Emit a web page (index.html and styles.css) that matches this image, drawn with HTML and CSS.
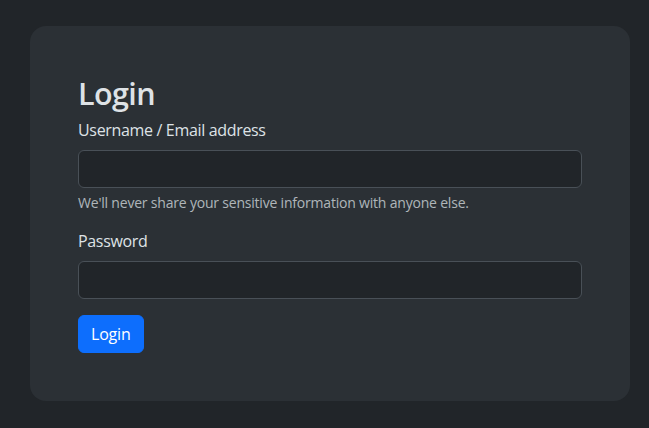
FILE: index.html
```html
<!DOCTYPE html>
<html lang="en">
<head>
<meta charset="utf-8">
<title>Login</title>
<link rel="stylesheet" href="styles.css">
</head>
<body>
<main class="card">
  <h1 class="title">Login</h1>
  <form class="form">
    <div class="field">
      <label class="label" for="user">Username / Email address</label>
      <input class="input" id="user" type="text">
      <div class="help">We'll never share your sensitive information with anyone else.</div>
    </div>
    <div class="field">
      <label class="label" for="pass">Password</label>
      <input class="input" id="pass" type="password">
    </div>
    <button class="btn" type="button">Login</button>
  </form>
</main>
</body>
</html>
```
FILE: styles.css
```css
html, body {
  margin: 0;
  padding: 0;
}
body {
  background: #212529;
  color: #dee2e6;
  font-family: "Open Sans", "Noto Sans", sans-serif;
  font-size: 16px;
  line-height: 24px;
  padding: 26px 19px 0 30px;
  height: 428px;
  box-sizing: border-box;
}
.card {
  width: 600px;
  box-sizing: border-box;
  background: #2b3035;
  border-radius: 16px;
  padding: 48px;
}
.title {
  margin: 0 0 6px;
  font-size: 30.5px;
  line-height: 38px;
  font-weight: 600;
  letter-spacing: -0.6px;
}
.form {
  margin: 0;
}
.field {
  margin-bottom: 16px;
}
.label {
  display: block;
  margin-bottom: 8px;
  letter-spacing: -0.33px;
}
.input {
  display: block;
  width: 100%;
  box-sizing: border-box;
  height: 38px;
  margin: 0;
  padding: 6px 12px;
  background: #212529;
  border: 1px solid #495057;
  border-radius: 6px;
  color: #dee2e6;
  font: inherit;
}
.help {
  margin-top: 4px;
  font-size: 14px;
  line-height: 21px;
  letter-spacing: -0.2px;
  color: rgba(222, 226, 230, 0.75);
}
.btn {
  display: block;
  height: 38px;
  padding: 6px 12px;
  background: #0d6efd;
  border: 1px solid #0d6efd;
  border-radius: 6px;
  color: #fff;
  font: inherit;
  letter-spacing: -0.2px;
  cursor: pointer;
}
```
